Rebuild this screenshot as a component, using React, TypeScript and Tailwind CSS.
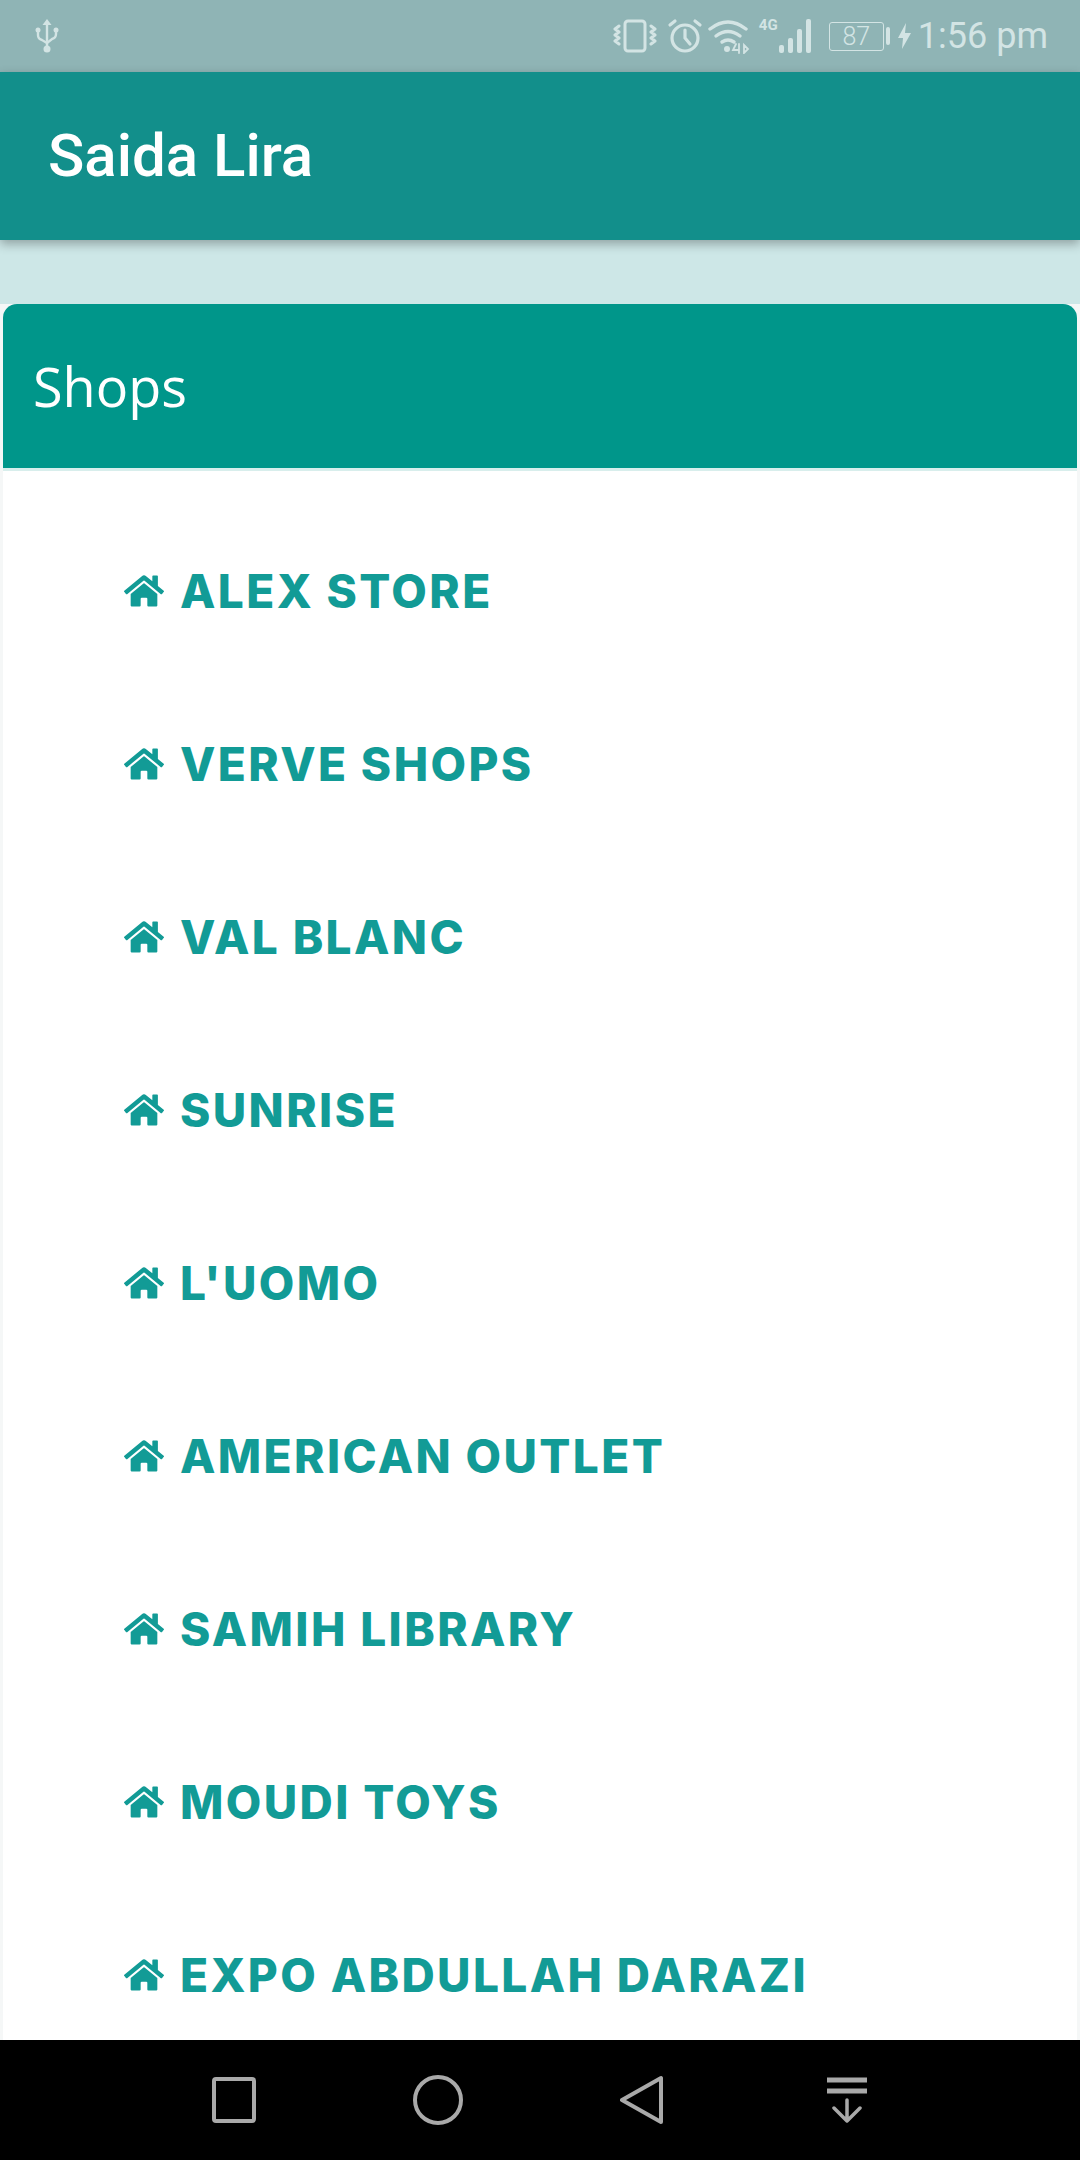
import { FaHome } from "react-icons/fa";

const shops = [
  "ALEX STORE",
  "VERVE SHOPS",
  "VAL BLANC",
  "SUNRISE",
  "L'UOMO",
  "AMERICAN OUTLET",
  "SAMIH LIBRARY",
  "MOUDI TOYS",
  "EXPO ABDULLAH DARAZI",
];

function StatusBar() {
  return (
    <div className="flex h-[72px] shrink-0 items-center justify-between bg-[#8fb4b5] pl-[35px] pr-[32px] text-[#d3e4e4]">
      <svg width="24" height="36" viewBox="0 0 24 36" fill="none" stroke="currentColor" strokeWidth="2.4">
        <path d="M12 4v28" />
        <path d="M7.5 7L12 1l4.500 6z" fill="currentColor" stroke="none" />
        <path d="M3 13v4q0 4 4 5l5 3l5-4q4-1 4-5v-2" />
        <circle cx="3" cy="12" r="2.500" fill="currentColor" stroke="none" />
        <circle cx="21" cy="12" r="2.500" fill="currentColor" stroke="none" />
        <circle cx="12" cy="31" r="3.500" fill="currentColor" stroke="none" />
      </svg>
      <div className="flex items-center">
        <svg width="44" height="36" viewBox="0 0 44 36" fill="none" stroke="currentColor" strokeWidth="3" strokeLinecap="round" strokeLinejoin="round" className="mr-[10px]">
          <rect x="12" y="3" width="20" height="30" rx="3" />
          <path d="M6 8l-4 3l4 3l-4 3l4 3l-4 3l4 3" />
          <path d="M38 8l4 3l-4 3l4 3l-4 3l4 3l-4 3" />
        </svg>
        <svg width="36" height="36" viewBox="0 0 36 36" fill="none" stroke="currentColor" strokeWidth="3.200" strokeLinecap="round" className="mr-[5px]">
          <circle cx="18" cy="20" r="13" />
          <path d="M18 12v8l5 6" />
          <path d="M3 7l5-4M33 7l-5-4" />
        </svg>
        <svg width="42" height="36" viewBox="0 0 42 36" fill="none" stroke="currentColor" strokeWidth="3.400" strokeLinecap="round" className="mr-[9px]">
          <path d="M2 11q18-14 36 0" />
          <path d="M8 18q12-9 24 0" />
          <path d="M14 24q6-4 12 0" />
          <circle cx="19" cy="31" r="3" fill="currentColor" stroke="none" />
          <path d="M28 26l-3 6h5M31 26v9M36 27v8l4-4z" strokeWidth="1.800" />
        </svg>
        <div className="relative mr-[14px] h-[36px] w-[56px]">
          <svg width="56" height="36" viewBox="0 0 56 36" fill="currentColor">
            <rect x="20" y="27" width="5" height="8" rx="2" />
            <rect x="29" y="20" width="5" height="15" rx="2" />
            <rect x="38" y="11" width="5" height="24" rx="2" />
            <rect x="47" y="1" width="5" height="34" rx="2" />
          </svg>
          <span className="absolute left-0 top-0 font-['Roboto',sans-serif] text-[15px] font-bold leading-[15px]">4G</span>
        </div>
        <div className="mr-[2px] flex h-[29px] w-[55px] items-center justify-center rounded-[3px] border-[1.500px] border-current font-['Roboto',sans-serif] text-[25px] font-light leading-none">
          87
        </div>
        <div className="mr-[8px] h-[18px] w-[4px] rounded-[2px] bg-current" />
        <svg width="13" height="28" viewBox="0 0 13 28" fill="currentColor" className="mr-[7px]">
          <path d="M8 1L0 16h5l-1 11l9-16H7z" />
        </svg>
        <span className="font-['Roboto',sans-serif] text-[36px] leading-none">1:56 pm</span>
      </div>
    </div>
  );
}

function NavBar() {
  return (
    <div className="flex h-[120px] shrink-0 items-center bg-black pl-[212px]">
      <svg width="44" height="46" viewBox="0 0 44 46" fill="none" stroke="#a9a9a9" strokeWidth="4" className="mr-[157px]">
        <rect x="2" y="2" width="40" height="42" rx="2" />
      </svg>
      <svg width="50" height="50" viewBox="0 0 50 50" fill="none" stroke="#a9a9a9" strokeWidth="4" className="mr-[157px]">
        <circle cx="25" cy="25" r="23" />
      </svg>
      <svg width="44" height="50" viewBox="0 0 44 50" fill="none" stroke="#a9a9a9" strokeWidth="4" strokeLinejoin="round" className="mr-[162px]">
        <path d="M41 3v44L2 25z" />
      </svg>
      <svg width="42" height="46" viewBox="0 0 42 46" fill="none" stroke="#a9a9a9" strokeLinecap="round" strokeLinejoin="round">
        <path d="M1 3h40M1 14h40" strokeWidth="5" strokeLinecap="butt" />
        <path d="M21 23v21M8 31l13 13l13-13" strokeWidth="3.500" />
      </svg>
    </div>
  );
}

export default function App() {
  return (
    <div className="flex h-[2160px] w-[1080px] flex-col overflow-hidden bg-[#f5f7f7]">
      <StatusBar />
      <div className="relative z-10 flex h-[168px] shrink-0 items-center bg-[#128f8b] pl-[48px] shadow-[0_4px_10px_rgba(0,0,0,0.3)]">
        <h1 className="font-['Roboto',sans-serif] text-[60px] font-medium leading-none text-white">Saida Lira</h1>
      </div>
      <div className="h-[64px] shrink-0 bg-[#cde7e7]" />
      <div className="mx-[3px] flex min-h-0 flex-1 flex-col overflow-hidden rounded-t-[14px] bg-white">
        <div className="flex h-[167px] shrink-0 items-center border-b-[3px] border-[#d8eeec] bg-[#00968a] pb-[1px] pl-[30px]">
          <h2 className="font-['Open_Sans',sans-serif] text-[54px] font-normal leading-none text-white">Shops</h2>
        </div>
        <ul className="pl-[121px] pt-[33px]">
          {shops.map((shop) => (
            <li key={shop} className="flex h-[173px] items-center gap-[16px] font-['Inter',sans-serif] text-[46px] font-extrabold leading-none tracking-[2.4px] text-[#129b96]">
              <FaHome className="h-[40px] w-[40px] shrink-0" />
              <span>{shop}</span>
            </li>
          ))}
        </ul>
      </div>
      <NavBar />
    </div>
  );
}
